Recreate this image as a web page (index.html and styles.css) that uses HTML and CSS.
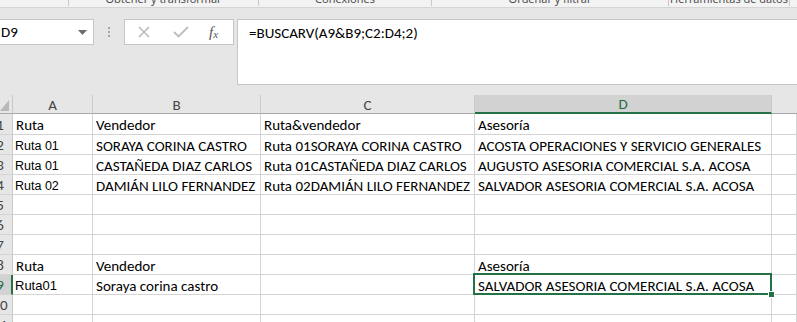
FILE: index.html
```html
<!DOCTYPE html>
<html lang="es">
<head>
<meta charset="utf-8">
<link rel="stylesheet" href="styles.css">
</head>
<body>
<div class="app">
  <div class="groups">
    <div class="grp g0"></div>
    <div class="grp g1"><span>Obtener y transformar</span></div>
    <div class="grp g2"><span>Conexiones</span></div>
    <div class="grp g3"><span>Ordenar y filtrar</span></div>
    <div class="grp g4"><span>Herramientas de datos</span></div>
    <div class="grp g5"></div>
  </div>
  <div class="fbar">
    <div class="namebox"><span>D9</span><svg class="caret" width="9" height="5" viewBox="0 0 9 5"><path d="M0 0h9L4.5 5z" fill="#6d6d6d"/></svg></div>
    <div class="dots"><i></i><i></i><i></i></div>
    <div class="fxbox">
      <svg class="ico" width="14" height="14" viewBox="0 0 14 14"><path d="M2 2l10 10M12 2L2 12" stroke="#bdbdbd" stroke-width="1.6" fill="none"/></svg>
      <svg class="ico" width="16" height="14" viewBox="0 0 16 14"><path d="M1 7l4.5 4.5L15 2" stroke="#bdbdbd" stroke-width="1.8" fill="none"/></svg>
      <span class="fx">f<sub>x</sub></span>
    </div>
    <div class="finput">=BUSCARV(A9&amp;B9;C2:D4;2)</div>
  </div>
  <div class="sheet">
    <div class="ch corner"><svg width="10" height="12" viewBox="0 0 10 12"><path d="M0 11H9V0z" fill="#b9b9b9"/></svg></div>
    <div class="ch">A</div><div class="ch">B</div><div class="ch">C</div><div class="ch sel">D</div><div class="ch e"></div>

    <div class="rh"><span>1</span></div>
    <div class="c">Ruta</div><div class="c">Vendedor</div><div class="c">Ruta&amp;vendedor</div><div class="c">Asesoría</div><div class="c"></div>

    <div class="rh"><span>2</span></div>
    <div class="c ar">Ruta 01</div><div class="c">SORAYA CORINA CASTRO</div><div class="c">Ruta 01SORAYA CORINA CASTRO</div><div class="c">ACOSTA OPERACIONES Y SERVICIO GENERALES</div><div class="c"></div>

    <div class="rh"><span>3</span></div>
    <div class="c ar">Ruta 01</div><div class="c">CASTAÑEDA DIAZ CARLOS</div><div class="c">Ruta 01CASTAÑEDA DIAZ CARLOS</div><div class="c">AUGUSTO ASESORIA COMERCIAL S.A. ACOSA</div><div class="c"></div>

    <div class="rh"><span>4</span></div>
    <div class="c ar">Ruta 02</div><div class="c">DAMIÁN LILO FERNANDEZ</div><div class="c">Ruta 02DAMIÁN LILO FERNANDEZ</div><div class="c">SALVADOR ASESORIA COMERCIAL S.A. ACOSA</div><div class="c"></div>

    <div class="rh"><span>5</span></div>
    <div class="c"></div><div class="c"></div><div class="c"></div><div class="c"></div><div class="c"></div>

    <div class="rh"><span>6</span></div>
    <div class="c"></div><div class="c"></div><div class="c"></div><div class="c"></div><div class="c"></div>

    <div class="rh"><span>7</span></div>
    <div class="c"></div><div class="c"></div><div class="c"></div><div class="c"></div><div class="c"></div>

    <div class="rh"><span>8</span></div>
    <div class="c">Ruta</div><div class="c">Vendedor</div><div class="c"></div><div class="c">Asesoría</div><div class="c"></div>

    <div class="rh sel"><span>9</span></div>
    <div class="c ar ar9">Ruta01</div><div class="c">Soraya corina castro</div><div class="c"></div><div class="c active">SALVADOR ASESORIA COMERCIAL S.A. ACOSA<i class="handle"></i></div><div class="c"></div>

    <div class="rh"><span>10</span></div>
    <div class="c"></div><div class="c"></div><div class="c"></div><div class="c"></div><div class="c"></div>

    <div class="rh"><span>11</span></div>
    <div class="c"></div><div class="c"></div><div class="c"></div><div class="c"></div><div class="c"></div>
  </div>
</div>
</body>
</html>
```
FILE: styles.css
```css
html, body {
  margin: 0;
  padding: 0;
  background: #ffffff;
  overflow: hidden;
}
.app {
  width: 797px;
  height: 322px;
  overflow: hidden;
  font-family: "Carlito", "Lato", sans-serif;
}
.groups {
  display: flex;
  height: 7px;
  background: #f3f3f3;
  border-bottom: 1px solid #d5d5d5;
  overflow: hidden;
}
.grp {
  box-sizing: border-box;
  border-right: 1px solid #c9c9c9;
  height: 6px;
  text-align: center;
  overflow: hidden;
}
.grp span {
  display: block;
  font-family: "Open Sans", "Noto Sans", sans-serif;
  font-size: 11px;
  line-height: 12px;
  margin-top: -7px;
  color: #444;
  white-space: nowrap;
}
.g0 { width: 69px; }
.g1 { width: 190px; }
.g2 { width: 173px; }
.g3 { width: 237px; }
.g4 { width: 121px; }
.g5 { flex: 1; border-right: 0; }

.fbar {
  height: 87px;
  background: #e6e6e6;
  display: flex;
  align-items: flex-start;
  padding-top: 11px;
  box-sizing: border-box;
}
.namebox {
  box-sizing: border-box;
  margin-left: -3px;
  width: 97px;
  height: 26px;
  background: #fff;
  border: 1px solid #c6c6c6;
  display: flex;
  align-items: center;
  justify-content: space-between;
  padding: 0 6px 0 3px;
  font-size: 15px;
  color: #000;
}
.caret { margin-top: 1px; }
.dots {
  width: 3px;
  margin: 8px 13px 0 14px;
  display: flex;
  flex-direction: column;
  gap: 2px;
}
.dots i {
  display: block;
  width: 2px;
  height: 2px;
  background: #a6a6a6;
}
.fxbox {
  box-sizing: border-box;
  width: 110px;
  height: 26px;
  background: #fff;
  border: 1px solid #c6c6c6;
  display: flex;
  align-items: center;
  padding-left: 12px;
}
.fxbox .ico:nth-child(1) { margin-right: 22px; }
.fxbox .ico:nth-child(2) { margin-right: 20px; }
.fx {
  font-family: "Liberation Serif", serif;
  font-style: italic;
  font-size: 15px;
  color: #555;
}
.fx sub {
  font-size: 11px;
  vertical-align: -1px;
}
.finput {
  box-sizing: border-box;
  margin-left: 3px;
  flex: 1;
  height: 66px;
  background: #fff;
  border: 1px solid #c6c6c6;
  border-right: 0;
  padding: 3px 0 0 11px;
  font-size: 15px;
  line-height: 20px;
  color: #000;
  white-space: nowrap;
}

.sheet {
  display: grid;
  grid-template-columns: 13px 80px 168px 214px 297px 1fr;
  grid-template-rows: 19px 21px repeat(10, 20px);
  font-size: 15px;
  color: #000;
}
.ch {
  box-sizing: border-box;
  background: #e6e6e6;
  border-right: 1px solid #cacaca;
  border-bottom: 1px solid #a9a9a9;
  display: flex;
  align-items: center;
  justify-content: center;
  color: #444;
  font-size: 15px;
  padding-top: 1px;
}
.ch.corner {
  justify-content: flex-start;
  align-items: flex-end;
  padding: 0 0 1px 0;
}
.ch.corner svg { display: block; }
.ch.sel {
  background: #d2d2d2;
  color: #1f6e43;
  border-bottom: 2px solid #217346;
}
.ch.e { border-right: 0; }
.rh {
  box-sizing: border-box;
  background: #e6e6e6;
  border-right: 1px solid #cacaca;
  border-bottom: 1px solid #d4d4d4;
  overflow: hidden;
  display: flex;
  align-items: center;
  color: #444;
  font-size: 15px;
  padding-top: 1px;
}
.rh span {
  flex: none;
  width: 24px;
  margin-left: -12px;
  text-align: center;
}
.rh.sel {
  background: #d2d2d2;
  color: #1f6e43;
  border-right: 2px solid #217346;
}
.c {
  box-sizing: border-box;
  border-right: 1px solid #d4d4d4;
  border-bottom: 1px solid #d4d4d4;
  display: flex;
  align-items: center;
  padding: 2px 0 0 3px;
  white-space: nowrap;
  overflow: visible;
  position: relative;
}
.c.ar {
  font-family: "Liberation Sans", Arial, sans-serif;
  font-size: 12.5px;
  padding-left: 2px;
}
.c.ar9 { font-size: 13px; }
.c.active::after {
  content: "";
  position: absolute;
  left: -2px;
  top: -2px;
  right: -1px;
  bottom: -1px;
  border: 2px solid #217346;
  pointer-events: none;
}
.handle {
  position: absolute;
  right: -4px;
  bottom: -4px;
  width: 5px;
  height: 5px;
  background: #217346;
  border: 1px solid #fff;
  z-index: 2;
}
```
